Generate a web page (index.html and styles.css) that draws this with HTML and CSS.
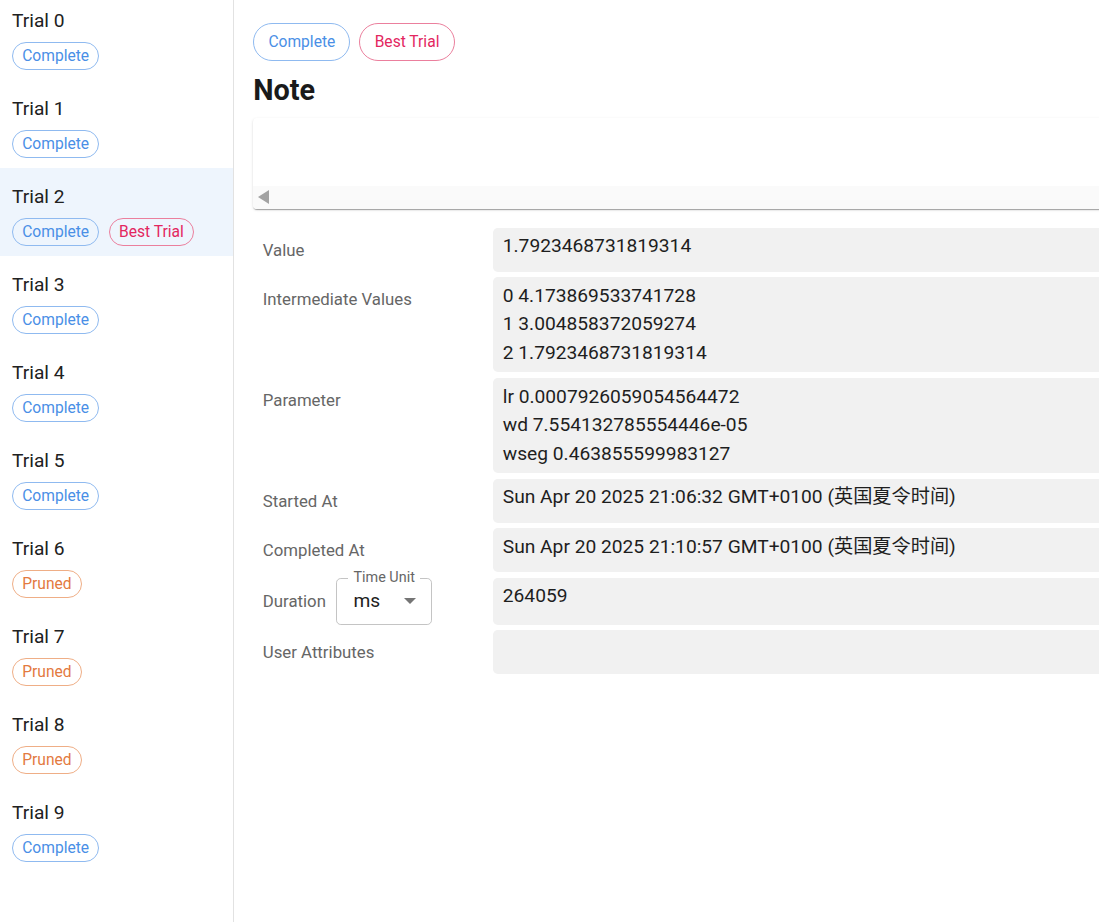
FILE: index.html
```html
<!DOCTYPE html>
<html lang="en">
<head>
<meta charset="utf-8">
<title>Trial detail</title>
<link rel="stylesheet" href="styles.css">
</head>
<body>
<div class="app">
  <aside class="sidebar">
    <ul class="trial-list">
      <li class="trial-item"><div class="trial-title">Trial 0</div><div class="chips"><span class="chip chip-sm chip-complete">Complete</span></div></li>
      <li class="trial-item"><div class="trial-title">Trial 1</div><div class="chips"><span class="chip chip-sm chip-complete">Complete</span></div></li>
      <li class="trial-item selected"><div class="trial-title">Trial 2</div><div class="chips"><span class="chip chip-sm chip-complete">Complete</span><span class="chip chip-sm chip-best">Best Trial</span></div></li>
      <li class="trial-item"><div class="trial-title">Trial 3</div><div class="chips"><span class="chip chip-sm chip-complete">Complete</span></div></li>
      <li class="trial-item"><div class="trial-title">Trial 4</div><div class="chips"><span class="chip chip-sm chip-complete">Complete</span></div></li>
      <li class="trial-item"><div class="trial-title">Trial 5</div><div class="chips"><span class="chip chip-sm chip-complete">Complete</span></div></li>
      <li class="trial-item"><div class="trial-title">Trial 6</div><div class="chips"><span class="chip chip-sm chip-pruned">Pruned</span></div></li>
      <li class="trial-item"><div class="trial-title">Trial 7</div><div class="chips"><span class="chip chip-sm chip-pruned">Pruned</span></div></li>
      <li class="trial-item"><div class="trial-title">Trial 8</div><div class="chips"><span class="chip chip-sm chip-pruned">Pruned</span></div></li>
      <li class="trial-item"><div class="trial-title">Trial 9</div><div class="chips"><span class="chip chip-sm chip-complete">Complete</span></div></li>
    </ul>
  </aside>
  <main class="main">
    <div class="content">
      <div class="chips top-chips">
        <span class="chip chip-md chip-complete">Complete</span>
        <span class="chip chip-md chip-best">Best Trial</span>
      </div>
      <h2 class="note-heading">Note</h2>
      <div class="note-paper">
        <div class="note-body"></div>
        <div class="note-scrollbar">
          <svg class="scroll-arrow" width="12" height="14" viewBox="0 0 12 14"><path d="M11 0 L11 14 L0 7 Z" fill="#a3a3a3"/></svg>
        </div>
      </div>
      <div class="detail">
        <div class="row">
          <div class="label">Value</div>
          <div class="value">1.7923468731819314</div>
        </div>
        <div class="row">
          <div class="label">Intermediate Values</div>
          <div class="value">0 4.173869533741728<br>1 3.004858372059274<br>2 1.7923468731819314</div>
        </div>
        <div class="row">
          <div class="label">Parameter</div>
          <div class="value">lr 0.0007926059054564472<br>wd 7.554132785554446e-05<br>wseg 0.463855599983127</div>
        </div>
        <div class="row">
          <div class="label">Started At</div>
          <div class="value">Sun Apr 20 2025 21:06:32 GMT+0100 (英国夏令时间)</div>
        </div>
        <div class="row">
          <div class="label">Completed At</div>
          <div class="value">Sun Apr 20 2025 21:10:57 GMT+0100 (英国夏令时间)</div>
        </div>
        <div class="row">
          <div class="label label-duration">
            <span>Duration</span>
            <div class="select">
              <span class="select-label">Time Unit</span>
              <span class="select-value">ms</span>
              <svg class="select-arrow" width="12" height="6" viewBox="0 0 12 6"><path d="M0 0 L12 0 L6 6 Z" fill="#757575"/></svg>
            </div>
          </div>
          <div class="value">264059</div>
        </div>
        <div class="row">
          <div class="label">User Attributes</div>
          <div class="value"></div>
        </div>
      </div>
    </div>
  </main>
</div>
</body>
</html>
```
FILE: styles.css
```css
* { box-sizing: border-box; }
html, body {
  margin: 0;
  padding: 0;
  height: 100%;
  overflow: hidden;
  background: #fff;
  font-family: Roboto, "Noto Sans CJK SC", sans-serif;
  color: #212121;
}
.app {
  display: flex;
  height: 922px;
}
.sidebar {
  width: 234px;
  flex: none;
  border-right: 1px solid #e2e2e2;
  overflow: hidden;
}
.trial-list {
  list-style: none;
  margin: -8px 0 0 0;
  padding: 0;
}
.trial-item {
  height: 88px;
  padding: 14.6px 12px 0 12px;
}
.trial-item.selected {
  background: #eef5fd;
}
.trial-title {
  font-size: 19.2px;
  line-height: 28.8px;
  color: #212121;
}
.chips {
  display: flex;
  gap: 9.6px;
}
.trial-item .chips {
  margin-top: 7px;
}
.chip {
  display: inline-flex;
  align-items: center;
  border: 1px solid;
  font-size: 15.6px;
  white-space: nowrap;
}
.chip-sm {
  height: 28px;
  border-radius: 14px;
  padding: 0 9.2px;
}
.chip-md {
  height: 37.4px;
  border-radius: 19px;
  padding: 0 14.2px;
}
.chip-complete { color: #4a8fe6; border-color: #8fbaf0; }
.chip-best { color: #e3275f; border-color: #eb7f9d; }
.chip-pruned { color: #e37a3f; border-color: #efae86; }

.main {
  flex: 1;
  overflow: hidden;
  padding: 23.3px 0 0 19.2px;
}
.content {
  width: 1200px;
}
.top-chips {
  gap: 9px;
}
.note-heading {
  margin: 10px 0 8.8px 0;
  font-size: 28.8px;
  line-height: 38.4px;
  font-weight: 700;
  color: #1a1a1a;
}
.note-paper {
  height: 91px;
  border-radius: 4px;
  background: #fff;
  box-shadow: 0 2px 1px -1px rgba(0,0,0,0.2), 0 1px 1px 0 rgba(0,0,0,0.14), 0 1px 3px 0 rgba(0,0,0,0.12);
  display: flex;
  flex-direction: column;
  overflow: hidden;
}
.note-body {
  flex: 1;
}
.note-scrollbar {
  height: 23px;
  background: #fafafa;
  display: flex;
  align-items: center;
  padding-left: 5px;
}
.scroll-arrow { display: block; }
.detail {
  margin-top: 19px;
}
.row {
  display: flex;
  margin-bottom: 5.7px;
}
.label {
  width: 240px;
  flex: none;
  padding: 10px 9.6px 9.2px;
  font-size: 16.8px;
  line-height: 24.5px;
  color: #666;
}
.label-duration {
  display: flex;
  align-items: center;
  gap: 10.5px;
  padding-top: 0;
  padding-bottom: 0;
}
.value {
  flex: 1;
  background: #f1f1f1;
  border-radius: 4.8px;
  padding: 4.4px 9.6px 4.4px;
  font-size: 19.2px;
  line-height: 28.8px;
  color: #1e1e1e;
  min-height: 37px;
}
.select {
  position: relative;
  width: 96px;
  height: 47px;
  border: 1px solid #c4c4c4;
  border-radius: 4.8px;
  display: flex;
  align-items: center;
  justify-content: space-between;
  padding: 0 15px 0 16px;
}
.select-label {
  position: absolute;
  top: -10px;
  left: 11px;
  padding: 0 5px;
  background: #fff;
  font-size: 14.4px;
  line-height: 18px;
  color: #666;
}
.select-value {
  font-size: 19.2px;
  color: #1e1e1e;
}
.select-arrow { display: block; }
```
